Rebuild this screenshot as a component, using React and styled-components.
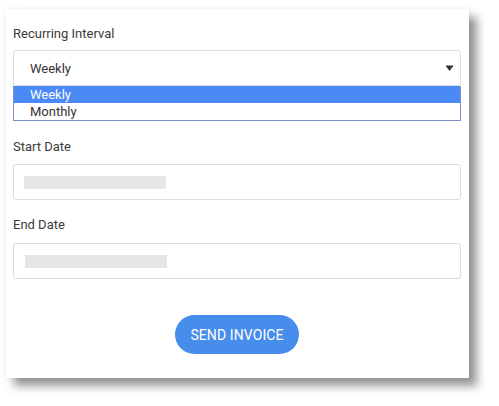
import React from 'react';
import styled, { createGlobalStyle } from 'styled-components';

const GlobalStyle = createGlobalStyle`
  body {
    margin: 0;
    background: #ffffff;
    font-family: Roboto, "Liberation Sans", Arial, sans-serif;
  }
`;

const Page = styled.div`
  width: 499px;
  height: 406px;
  padding: 9px 0 0 6px;
  box-sizing: border-box;
`;

const Card = styled.form`
  width: 463px;
  height: 369px;
  box-sizing: border-box;
  padding: 17px 8px 0 7px;
  background: #ffffff;
  box-shadow: 8px 8px 9px rgba(0, 0, 0, 0.42), 0 0 6px rgba(0, 0, 0, 0.07);
  display: flex;
  flex-direction: column;
`;

const Field = styled.div`
  display: flex;
  flex-direction: column;
  margin-bottom: ${props => props.gap ?? 17}px;
`;

const Label = styled.label`
  font-size: 13px;
  line-height: 16px;
  color: #3a3a3a;
  margin-bottom: ${props => props.space || 9}px;
`;

const SelectBox = styled.div`
  position: relative;
  height: 36px;
  box-sizing: border-box;
  border: 1px solid #dcdcdc;
  border-radius: 3px;
  padding-left: 16px;
  display: flex;
  align-items: center;
  font-size: 13px;
  color: #333333;
`;

const Arrow = styled.svg`
  position: absolute;
  right: 7px;
  top: 14px;
`;

const OptionList = styled.ul`
  list-style: none;
  margin: 0;
  padding: 0;
  border: 1px solid #7f8fc6;
  border-top: none;
`;

const Option = styled.li`
  height: 17px;
  line-height: 17px;
  padding-left: 16px;
  font-size: 13px;
  background: ${props => (props.active ? '#4a89f6' : '#ffffff')};
  color: ${props => (props.active ? '#ffffff' : '#333333')};
`;

const InputBox = styled.div`
  height: 36px;
  box-sizing: border-box;
  border: 1px solid #dcdcdc;
  border-radius: 3px;
  padding-left: ${props => props.inset || 10}px;
  display: flex;
  align-items: center;
`;

const Placeholder = styled.span`
  display: block;
  width: 142px;
  height: 13px;
  background: #e6e6e6;
`;

const Actions = styled.div`
  display: flex;
  justify-content: center;
  margin-top: 36px;
`;

const Button = styled.button`
  width: 124px;
  height: 39px;
  border: none;
  border-radius: 20px;
  background: #478deb;
  color: #ffffff;
  font-family: Roboto, "Liberation Sans", Arial, sans-serif;
  font-size: 14px;
  letter-spacing: 0.1px;
  cursor: pointer;
`;

export default function App() {
  return (
    <>
      <GlobalStyle />
      <Page>
        <Card>
          <Field gap={18}>
            <Label space={8}>Recurring Interval</Label>
            <SelectBox>
              Weekly
              <Arrow width="7" height="6" viewBox="0 0 7 6">
                <path d="M0 0.5 H7 V1.2 L3.5 6 L0 1.2 Z" fill="#333" />
              </Arrow>
            </SelectBox>
            <OptionList>
              <Option active>Weekly</Option>
              <Option>Monthly</Option>
            </OptionList>
          </Field>
          <Field>
            <Label>Start Date</Label>
            <InputBox>
              <Placeholder />
            </InputBox>
          </Field>
          <Field gap={0}>
            <Label space={10}>End Date</Label>
            <InputBox inset={11}>
              <Placeholder />
            </InputBox>
          </Field>
          <Actions>
            <Button type="button">SEND INVOICE</Button>
          </Actions>
        </Card>
      </Page>
    </>
  );
}
